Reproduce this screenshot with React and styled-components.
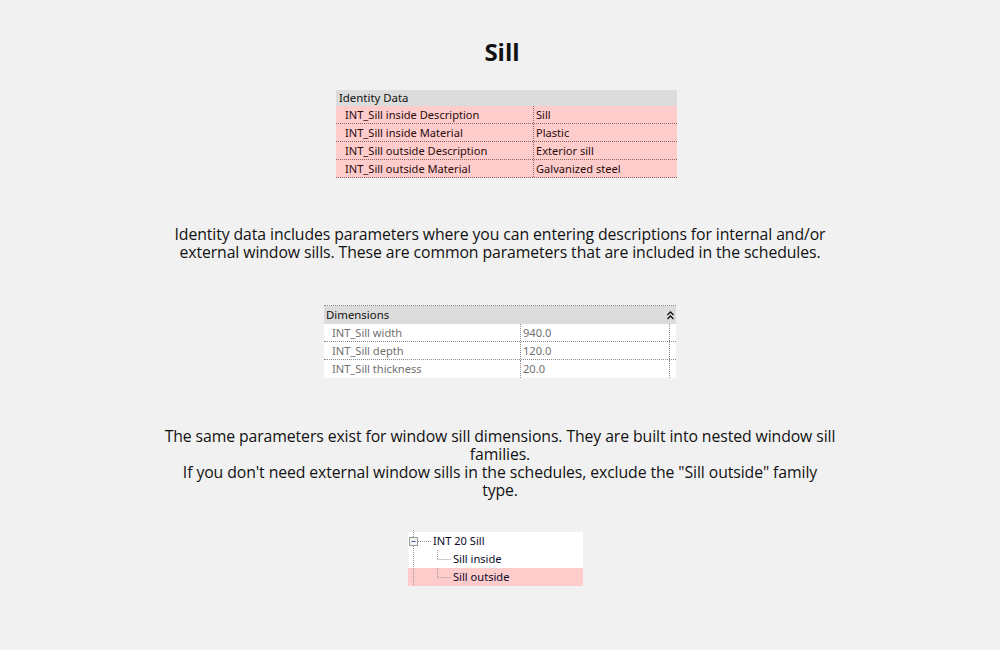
import React from "react";
import styled, { createGlobalStyle } from "styled-components";

const Global = createGlobalStyle`
  html, body { margin: 0; padding: 0; background: #f1f1f1; }
  body { font-family: "Open Sans", "Noto Sans", sans-serif; color: #111; }
`;

const Page = styled.main`
  display: flex;
  flex-direction: column;
  align-items: center;
  padding-top: 37px;
  min-height: 650px;
  box-sizing: border-box;
`;

const Title = styled.h1`
  margin: 0 0 0 4px;
  font-size: 24px;
  line-height: 30px;
  font-weight: 700;
  color: #111;
`;

const Text = styled.p`
  margin: ${(p) => p.$mt}px 0 0;
  width: 720px;
  text-align: center;
  font-size: 15.8px;
  line-height: 18px;
  letter-spacing: -0.1px;
  white-space: nowrap;
`;

/* property-palette style panel */
const Panel = styled.div`
  margin-top: ${(p) => p.$mt}px;
  margin-left: ${(p) => p.$shift || 0}px;
  width: ${(p) => p.$w}px;
  font-family: "Noto Sans", "Open Sans", sans-serif;
  font-size: 11.1px;
  border-top: ${(p) => (p.$topLine ? "1px dotted #8a8a8a" : "none")};
`;

const PanelHead = styled.div`
  display: flex;
  align-items: center;
  justify-content: space-between;
  height: 16px;
  padding: 0 3px;
  background: #dcdcdc;
  color: #111;
  line-height: 16px;
  font-size: 11.4px;
  ${(p) => p.$tall && "height: 18px; padding: 0 2px;"}
`;

const Chevron = styled.svg`
  width: 7px;
  height: 9px;
`;

const Row = styled.div`
  display: grid;
  grid-template-columns: ${(p) => p.$cols};
  height: 18px;
  background: ${(p) => (p.$hot ? "#ffcccc" : "#ffffff")};
  color: ${(p) => (p.$hot ? "#2a0c0c" : "#707070")};
  line-height: 17px;
  border-bottom: ${(p) => (p.$last ? "none" : `1px dotted ${p.$hot ? "#8a6262" : "#8a8a8a"}`)};
  box-sizing: border-box;
`;

const Cell = styled.div`
  padding-left: ${(p) => p.$pl}px;
  border-right: ${(p) => (p.$line ? `1px dotted ${p.$hot ? "#8a6262" : "#8a8a8a"}` : "none")};
  white-space: nowrap;
  overflow: hidden;
`;

/* family tree */
const Tree = styled.div`
  margin-top: ${(p) => p.$mt}px;
  width: 175px;
  margin-left: -9px;
  background: #ffffff;
  font-family: "Noto Sans", "Open Sans", sans-serif;
  font-size: 11.1px;
  color: #0a0a2a;
`;

const Node = styled.div`
  position: relative;
  height: 18px;
  line-height: 17px;
  padding-left: ${(p) => p.$pl}px;
  background: ${(p) => (p.$hot ? "#ffcccc" : "transparent")};
`;

const Guide = styled.svg`
  position: absolute;
  left: 0;
  top: 0;
  width: 50px;
  height: 18px;
  overflow: visible;
`;

const dots = { stroke: "#9a9a9a", strokeWidth: 1, strokeDasharray: "1 1" };

export default function App() {
  const identity = [
    ["INT_Sill inside Description", "Sill"],
    ["INT_Sill inside Material", "Plastic"],
    ["INT_Sill outside Description", "Exterior sill"],
    ["INT_Sill outside Material", "Galvanized steel"],
  ];
  const dims = [
    ["INT_Sill width", "940.0"],
    ["INT_Sill depth", "120.0"],
    ["INT_Sill thickness", "20.0"],
  ];
  return (
    <>
      <Global />
      <Page>
        <Title>Sill</Title>

        <Panel $mt={23} $w={341} $shift={13}>
          <PanelHead>Identity Data</PanelHead>
          {identity.map(([k, v]) => (
            <Row key={k} $hot $cols="198px 1fr">
              <Cell $pl={9} $line $hot>{k}</Cell>
              <Cell $pl={2}>{v}</Cell>
            </Row>
          ))}
        </Panel>

        <Text $mt={47}>
          Identity data includes parameters where you can entering descriptions for internal and/or
          <br />
          external window sills. These are common parameters that are included in the schedules.
        </Text>

        <Panel $mt={44} $w={352} $topLine>
          <PanelHead $tall>
            <span>Dimensions</span>
            <Chevron viewBox="0 0 7 9">
              <path d="M0.5 4 L3.5 1 L6.5 4 M0.5 8 L3.5 5 L6.5 8" fill="none" stroke="#111" strokeWidth="1.3" />
            </Chevron>
          </PanelHead>
          {dims.map(([k, v], i) => (
            <Row key={k} $cols="197px 149px 6px" $last={i === dims.length - 1}>
              <Cell $pl={8} $line>{k}</Cell>
              <Cell $pl={2} $line>{v}</Cell>
              <Cell />
            </Row>
          ))}
        </Panel>

        <Text $mt={49}>
          The same parameters exist for window sill dimensions. They are built into nested window sill
          <br />
          families.
          <br />
          If you don't need external window sills in the schedules, exclude the "Sill outside" family
          <br />
          type.
        </Text>

        <Tree $mt={33}>
          <Node $pl={25}>
            <Guide viewBox="0 0 50 18">
              <line x1="5.5" y1="-2" x2="5.5" y2="5" {...dots} />
              <line x1="5.5" y1="14" x2="5.5" y2="20" {...dots} />
              <rect x="1.5" y="5.5" width="8" height="8" fill="#f4f4f4" stroke="#9a9a9a" />
              <line x1="3.5" y1="9.5" x2="7.5" y2="9.5" stroke="#3a5a9a" strokeWidth="1" />
              <line x1="10" y1="9.5" x2="23" y2="9.5" {...dots} />
            </Guide>
            INT 20 Sill
          </Node>
          <Node $pl={45}>
            <Guide viewBox="0 0 50 18">
              <line x1="5.5" y1="0" x2="5.5" y2="18" {...dots} />
              <line x1="29.5" y1="0" x2="29.5" y2="9" {...dots} />
              <line x1="29.5" y1="9.5" x2="43" y2="9.5" {...dots} />
            </Guide>
            Sill inside
          </Node>
          <Node $pl={45} $hot>
            <Guide viewBox="0 0 50 18">
              <line x1="5.5" y1="0" x2="5.5" y2="18" {...dots} />
              <line x1="29.5" y1="0" x2="29.5" y2="9" {...dots} />
              <line x1="29.5" y1="9.5" x2="43" y2="9.5" {...dots} />
            </Guide>
            Sill outside
          </Node>
        </Tree>
      </Page>
    </>
  );
}
